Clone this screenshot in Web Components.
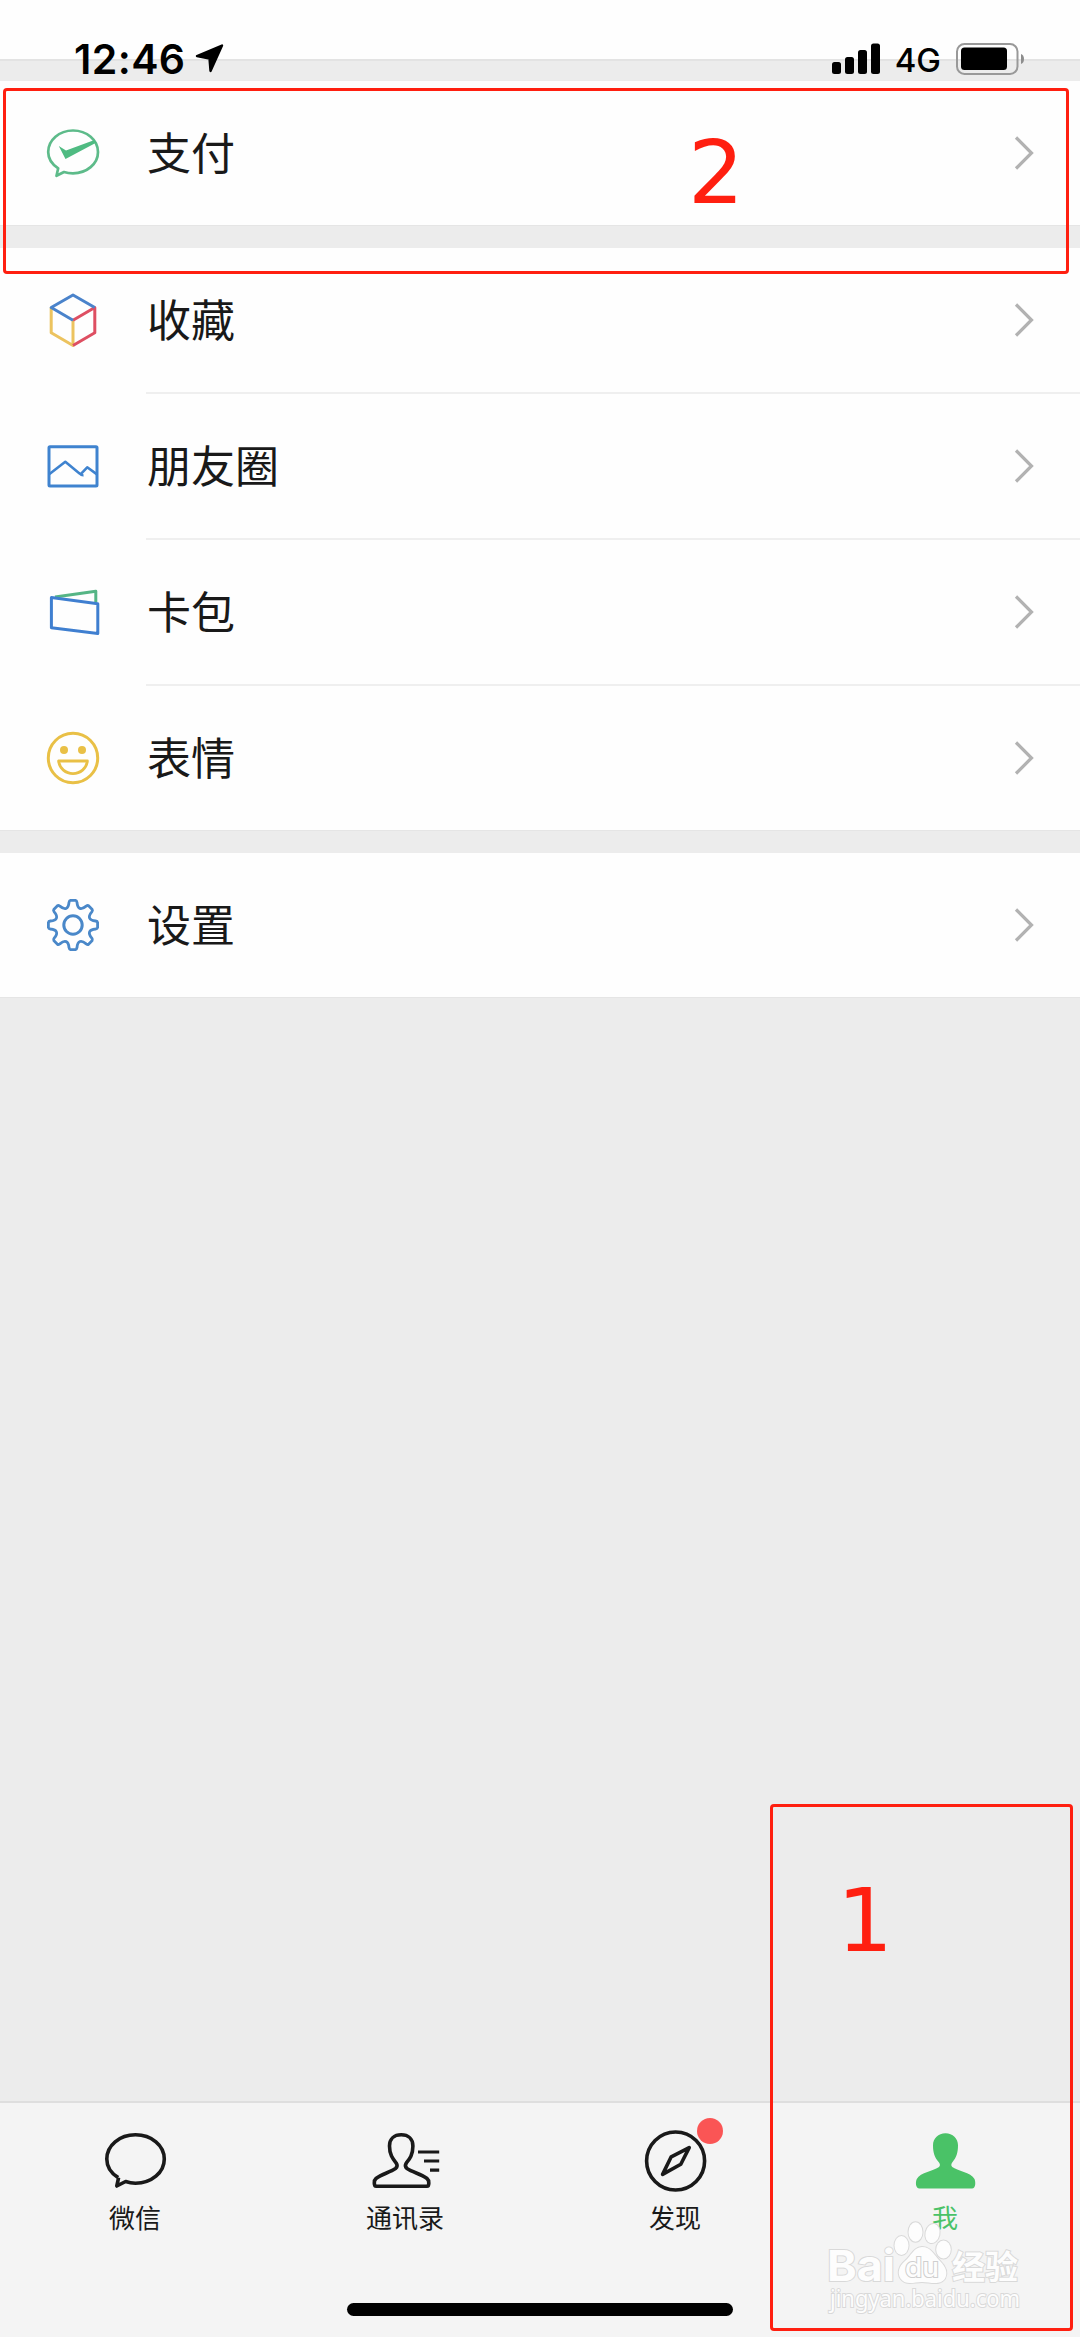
<!DOCTYPE html>
<html lang="zh-CN">
<head>
<meta charset="utf-8">
<title>微信</title>
<style>
  body {
    margin: 0;
    background: #ececec;
    font-family: "Noto Sans CJK SC", sans-serif;
  }
</style>
</head>
<body>
<me-page></me-page>

<script>
// one tooth and one valley, turned 8 times around the centre
function gearPath(cx, cy) {
  let d = '';
  const at = (x, y, a) => {
    const px = cx + x * Math.cos(a) - y * Math.sin(a);
    const py = cy + x * Math.sin(a) + y * Math.cos(a);
    return px.toFixed(2) + ' ' + py.toFixed(2);
  };
  for (let i = 0; i < 8; i++) {
    const a = i * Math.PI / 4;
    d += (i ? 'L' : 'M') + at(-2.6, -24.6, a) + 'L' + at(2.6, -24.6, a);
    d += 'Q' + at(3.7, -24.4, a) + ' ' + at(4, -22.6, a);
    d += 'Q' + at(4.4, -17.6, a) + ' ' + at(6.8, -16.6, a);
    const b = a + Math.PI / 4;
    d += 'Q' + at(-4.4, -17.6, b) + ' ' + at(-4, -22.6, b);
    d += 'Q' + at(-3.7, -24.4, b) + ' ' + at(-2.6, -24.6, b);
  }
  return d + 'Z';
}

const ROW_ICONS = {
  pay: `
    <path d="M15.2 45.3C8.8 41.2 5.2 35.6 5.2 29C5.2 17 16.3 7.5 30 7.5S55 17 55 29S43.700 50.3 30 50.3C26.8 50.3 23.8 49.9 21 49L13.5 52.8Z" stroke="#5dbb8a" stroke-width="2.7"/>
    <path d="M15.8 23L23 27.6L51.500 17L53.500 19.6L22.500 36Z" fill="#4fbb82"/>`,
  fav: `
    <path d="M8.2 17.5V42.8L30 55.5V30.3" stroke="#ecc35f"/>
    <path d="M30 55.5L51.8 42.8V17.5L30 30.3" stroke="#de4f62"/>
    <path d="M51.8 17.5L30 5L8.2 17.5L30 30.3" stroke="#4a83cb"/>`,
  moments: `
    <rect x="6" y="10.8" width="48" height="39.2" rx="1" stroke="#3f83cf"/>
    <path d="M6.5 38L22.3 25.8L36.5 37.4Q38.5 39.5 40.5 39.3M37.5 38.3L44.2 31.3L54 38.4" stroke="#3f83cf" stroke-width="2.6"/>`,
  cards: `
    <path d="M12 14.9L52.8 9.3V20" stroke="#55b585"/>
    <path d="M8.4 15.6L54.8 21.8V51.6L8.4 45.8Z" stroke="#3f7fd0"/>`,
  sticker: `
    <circle cx="30" cy="30" r="24.7" stroke="#e9c046"/>
    <circle cx="21" cy="22" r="4" fill="#e9c046"/><circle cx="39" cy="22" r="4" fill="#e9c046"/>
    <path d="M15.6 33H44.4C43.4 40.6 37.3 45.6 30 45.6S16.6 40.6 15.6 33Z" stroke="#e9c046" stroke-width="2.8"/>`,
  settings: `
    <path d="${gearPath(30, 30)}" stroke="#4a88c9" stroke-width="2.8"/>
    <circle cx="30" cy="30" r="9.2" stroke="#4a88c9"/>`
};

const TAB_ICONS = {
  chat: `<path d="M18.2 49.6C11 45.2 6.8 38.7 6.8 31C6.8 17.4 19.5 6.8 35.5 6.8S64.3 17.4 64.3 31S51.5 55.2 35.5 55.2C32 55.2 28.7 54.6 25.6 53.5L16.8 58L18.6 49.6"/>`,
  contacts: `
    <path d="M19.5 18C19.5 11 24.2 6.8 31.2 6.8S42.900 11 42.900 18C42.900 27 39.500 31 36.300 35C35 37 35 39 37 40.500C43 44.500 51 46 57 50.500C59.500 52.500 59.300 58.200 57 58.200H6.200C3.800 58.200 3.600 52.500 6 50.500C12 46 19.500 44.500 25.500 40.500C27.500 39 27.500 37 26.200 35C23 31 19.500 27 19.500 18Z"/>
    <path d="M48 24H69.2M54 33H69.2M60 42.2H69.2" stroke-width="3.2" stroke-linecap="butt"/>`,
  discover: `
    <circle cx="35.6" cy="33" r="29"/>
    <path d="M49.2 19.6L40.8 36.3L22.6 46.4L31.2 28.8Z"/>`,
  me: `<path fill="currentColor" stroke="none" d="M35.5 5.2C42.7 5.2 48 10.3 48 17.2C48 24.5 46.5 29.5 42.2 34.4C41 36 41 37.7 42.3 39C47 42.8 61 44.3 64.5 51C65.8 54 65.8 60.6 62 60.6H9.5C5.5 60.6 5.3 54 6.8 51C10.3 44.3 24.2 42.8 29 39C30.3 37.7 30.2 36 29 34.4C24.5 29.5 23 24.5 23 17.2C23 10.3 28.3 5.2 35.5 5.2Z"/>`
};

class StatusBar extends HTMLElement {
  constructor() {
    super();
    this.attachShadow({mode: 'open'}).innerHTML = `
      <style>
        :host {
          box-sizing: border-box;
          display: flex;
          justify-content: space-between;
          height: 81px;
          padding: 37px 55px 0 74px;
          color: #000;
          background: linear-gradient(#fefefe 59px, #e3e3e3 59px, #e3e3e3 61px, #ececec 61px);
        }
        div { display: flex; align-items: center; height: 44px; }
        .time { font: 600 41px/44px Inter, sans-serif; letter-spacing: 0.4px; }
        .net { font: 500 33px/44px Inter, sans-serif; margin: 2px 15px 0 14px; }
        svg { display: block; }
        .arrow { margin: -2px 0 0 9px; }
      </style>
      <div>
        <span class="time">12:46</span>
        <svg class="arrow" width="30" height="30" viewBox="0 0 30 30"><path d="M2 13L27 2.500L15.500 28L14.500 15.500Z" stroke="#000" stroke-width="2.400" stroke-linejoin="round"/></svg>
      </div>
      <div>
        <svg width="49" height="32" viewBox="0 0 49 32">
          <rect x="0" y="19" width="9" height="12" rx="2.5"/>
          <rect x="13" y="14" width="9" height="17" rx="2.5"/>
          <rect x="26" y="7" width="9" height="24" rx="2.5"/>
          <rect x="39" y="0.5" width="9" height="30.5" rx="2.5"/>
        </svg>
        <span class="net">4G</span>
        <svg width="69" height="32" viewBox="0 0 69 32">
          <rect x="1" y="1" width="60.5" height="30" rx="7.5" fill="none" stroke="#999" stroke-width="2"/>
          <rect x="5" y="4.5" width="46" height="22.5" rx="3.5"/>
          <path d="M65 11Q68 12 68 16T65 21Z" fill="#8d8d8d"/>
        </svg>
      </div>
    `;
  }
}
customElements.define('status-bar', StatusBar);

class ListRow extends HTMLElement {
  connectedCallback() {
    const shadow = this.attachShadow({mode: 'open'});
    shadow.innerHTML = `
      <style>
        :host {
          display: flex;
          align-items: center;
          height: 144px;
          padding-left: 43px;
          background: #fefefe;
        }
        :host([divided]) { height: 146px; }
        .icon { width: 60px; height: 60px; margin-right: 43px; fill: none; stroke-width: 3; stroke-linejoin: round; }
        :host([divided]) .icon { margin-bottom: 2px; }
        .body {
          box-sizing: border-box;
          flex: 1;
          height: 100%;
          display: flex;
          align-items: center;
          justify-content: space-between;
          padding-right: 46px;
          color: #191919;
          font-size: 44px;
          line-height: 60px;
        }
        :host([divided]) .body { border-bottom: 2px solid #efefef; }
        .label { margin-bottom: 4px; padding-left: 1px; }
        .go { width: 20px; height: 36px; fill: none; stroke: #b2b2b2; stroke-width: 3.2; }
      </style>
      <svg class="icon" viewBox="0 0 60 60">${ROW_ICONS[this.getAttribute('icon')]}</svg>
      <div class="body">
        <span class="label"><slot></slot></span>
        <svg class="go" viewBox="0 0 20 36"><path d="M2 2.5L17.5 18L2 33.5"/></svg>
      </div>
    `;
  }
}
customElements.define('list-row', ListRow);

class ListGroup extends HTMLElement {
  constructor() {
    super();
    this.attachShadow({mode: 'open'}).innerHTML = `
      <style>
        :host { display: block; margin-bottom: 23px; box-shadow: 0 1px 0 #e5e5e5; }
      </style>
      <slot></slot>
    `;
  }
}
customElements.define('list-group', ListGroup);

class TabItem extends HTMLElement {
  connectedCallback() {
    const shadow = this.attachShadow({mode: 'open'});
    const dot = this.hasAttribute('dot') ? '<i></i>' : '';
    shadow.innerHTML = `
      <style>
        :host {
          display: flex;
          flex-direction: column;
          align-items: center;
          padding-top: 25px;
          color: #191919;
          font-size: 26px;
          line-height: 36px;
        }
        :host([active]) { color: #4ac267; }
        .icon { position: relative; height: 64px; margin-bottom: 7px; }
        svg {
          display: block;
          fill: none;
          stroke: currentColor;
          stroke-width: 3.6;
          stroke-linejoin: round;
        }
        i {
          position: absolute;
          left: 57px;
          top: -10px;
          width: 26px;
          height: 26px;
          border-radius: 50%;
          background: #fa5555;
        }
      </style>
      <div class="icon">
        <svg width="70" height="64" viewBox="0 0 70 64">${TAB_ICONS[this.getAttribute('icon')]}</svg>
        ${dot}
      </div>
      <slot></slot>
    `;
  }
}
customElements.define('tab-item', TabItem);

class TabBar extends HTMLElement {
  constructor() {
    super();
    this.attachShadow({mode: 'open'}).innerHTML = `
      <style>
        :host {
          box-sizing: border-box;
          display: flex;
          flex-direction: column;
          justify-content: space-between;
          align-items: center;
          height: 236px;
          padding-bottom: 21px;
          border-top: 2px solid #dedede;
          background: #f4f4f4;
        }
        .tabs { display: grid; grid-template-columns: repeat(4, 1fr); width: 100%; }
        .home { width: 386px; height: 13px; border-radius: 7px; background: #000; }
      </style>
      <div class="tabs"><slot></slot></div>
      <div class="home"></div>
    `;
  }
}
customElements.define('tab-bar', TabBar);

// red frame with a step number, drawn over the page
class StepMark extends HTMLElement {
  constructor() {
    super();
    this.attachShadow({mode: 'open'}).innerHTML = `
      <style>
        :host {
          box-sizing: border-box;
          position: absolute;
          border: 3px solid #ff1f10;
          border-radius: 4px;
          color: #ff1f10;
          font: 88px/104px "DejaVu Sans", sans-serif;
        }
        span { position: absolute; left: var(--num-x); top: var(--num-y); }
      </style>
      <span><slot></slot></span>
    `;
  }
}
customElements.define('step-mark', StepMark);

class WaterMark extends HTMLElement {
  constructor() {
    super();
    this.attachShadow({mode: 'open'}).innerHTML = `
      <style>
        :host { position: absolute; left: 820px; top: 2215px; }
        svg { display: block; }
        text, .paw { fill: #fdfdfd; stroke: #d9d9d9; stroke-width: 2; paint-order: stroke; }
      </style>
      <svg width="210" height="112" viewBox="0 0 210 112">
        <text x="7" y="66" font-family="Inter, sans-serif" font-weight="700" font-size="43" textLength="68" lengthAdjust="spacingAndGlyphs">Bai</text>
        <g class="paw">
          <ellipse cx="81.5" cy="30.5" rx="7" ry="9.5"/>
          <ellipse cx="95.5" cy="17" rx="7" ry="9.7"/>
          <ellipse cx="112.5" cy="18.5" rx="7" ry="9.7" transform="rotate(12 112.5 18.5)"/>
          <ellipse cx="123.5" cy="34.5" rx="7.3" ry="9"/>
          <path d="M102 32C111 32 114 40 120 46C126 52 128 58 125 63.5C120 71 110 67 102 67S86 71 80.5 63.5C77 58 79 51 85 46C91 41 94 32 102 32Z"/>
        </g>
        <text x="85" y="61.500" font-family="Inter, sans-serif" font-weight="500" font-size="27" textLength="34" lengthAdjust="spacingAndGlyphs" style="stroke:#cfcfcf">du</text>
        <text x="132" y="64" font-family="Noto Sans CJK SC, sans-serif" font-weight="700" font-size="33" textLength="66" lengthAdjust="spacingAndGlyphs">经验</text>
        <text x="10" y="92" font-family="Noto Sans, sans-serif" font-weight="400" font-size="23" textLength="190" lengthAdjust="spacingAndGlyphs">jingyan.baidu.com</text>
      </svg>
    `;
  }
}
customElements.define('water-mark', WaterMark);

class MePage extends HTMLElement {
  constructor() {
    super();
    this.attachShadow({mode: 'open'}).innerHTML = `
      <style>
        :host {
          position: relative;
          display: flex;
          flex-direction: column;
          width: 1080px;
          height: 2337px;
          overflow: hidden;
          background: #ececec;
        }
        main { flex: 1; }
        .step2 { left: 3px; top: 88px; width: 1066px; height: 186px; --num-x: 682px; --num-y: 30px; }
        .step1 { left: 770px; top: 1804px; width: 303px; height: 527px; --num-x: 64px; --num-y: 62px; }
      </style>
      <status-bar></status-bar>
      <main>
        <list-group>
          <list-row icon="pay">支付</list-row>
        </list-group>
        <list-group>
          <list-row icon="fav" divided>收藏</list-row>
          <list-row icon="moments" divided>朋友圈</list-row>
          <list-row icon="cards" divided>卡包</list-row>
          <list-row icon="sticker">表情</list-row>
        </list-group>
        <list-group>
          <list-row icon="settings">设置</list-row>
        </list-group>
      </main>
      <tab-bar>
        <tab-item icon="chat">微信</tab-item>
        <tab-item icon="contacts">通讯录</tab-item>
        <tab-item icon="discover" dot>发现</tab-item>
        <tab-item icon="me" active>我</tab-item>
      </tab-bar>
      <water-mark></water-mark>
      <step-mark class="step2">2</step-mark>
      <step-mark class="step1">1</step-mark>
    `;
  }
}
customElements.define('me-page', MePage);
</script>
</body>
</html>
